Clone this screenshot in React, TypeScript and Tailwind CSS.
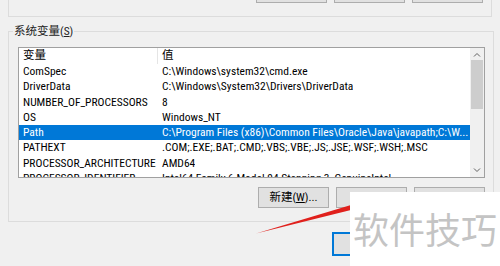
import React from 'react';

const rows = [
  { name: 'ComSpec', value: 'C:\\Windows\\system32\\cmd.exe' },
  { name: 'DriverData', value: 'C:\\Windows\\System32\\Drivers\\DriverData' },
  { name: 'NUMBER_OF_PROCESSORS', value: '8' },
  { name: 'OS', value: 'Windows_NT' },
  {
    name: 'Path',
    value: 'C:\\Program Files (x86)\\Common Files\\Oracle\\Java\\javapath;C:\\W...',
    selected: true,
  },
  { name: 'PATHEXT', value: '.COM;.EXE;.BAT;.CMD;.VBS;.VBE;.JS;.JSE;.WSF;.WSH;.MSC' },
  { name: 'PROCESSOR_ARCHITECTURE', value: 'AMD64' },
  { name: 'PROCESSOR_IDENTIFIER', value: 'Intel64 Family 6 Model 94 Stepping 3, GenuineIntel' },
];

function WinButton({ children, className = '' }: { children?: React.ReactNode; className?: string }) {
  return (
    <div
      className={`w-[71px] h-[21px] flex items-center justify-center bg-[#e1e1e1] border border-[#adadad] text-[11.5px] text-black ${className}`}
    >
      {children}
    </div>
  );
}

export default function App() {
  return (
    <div
      className="relative w-[500px] h-[266px] overflow-hidden bg-[#f0f0f0] text-black"
      style={{ fontFamily: '"Roboto Condensed", "Noto Sans CJK SC", sans-serif' }}
    >
      {/* user variables group (cut off at top) */}
      <div className="mx-[8px] h-[17px] border-x border-b border-[#dcdcdc] flex justify-end gap-[7px] pr-[8px]">
        <WinButton className="-mt-[18px]" />
        <WinButton className="-mt-[18px]" />
        <WinButton className="-mt-[18px]" />
      </div>

      {/* system variables group */}
      <fieldset className="mx-[8px] mt-[6px] border border-[#dcdcdc] pb-[13px] pr-[8px]">
        <legend className="ml-[4px] px-[1px] text-[11.5px] leading-[16px] text-[#222]">
          系统变量(<span className="underline">S</span>)
        </legend>

        <div className="ml-[9px] mt-[8px] w-[467px] h-[131px] bg-white border border-[#a0a0a0] flex overflow-hidden">
          <div className="flex-1 flex flex-col text-[11.5px] min-w-0">
            <div className="h-[16px] flex items-center shrink-0">
              <div className="w-[139px] pl-[4px] border-r border-[#e5e5e5] h-full flex items-center">变量</div>
              <div className="pl-[4px]">值</div>
            </div>
            {rows.map((r) => (
              <div
                key={r.name}
                className={`h-[15.25px] shrink-0 flex items-center whitespace-nowrap overflow-hidden ${
                  r.selected ? 'bg-[#0078d7] text-white' : ''
                }`}
              >
                <div className="w-[139px] pl-[4px] shrink-0 overflow-hidden">{r.name}</div>
                <div className="pl-[4px] overflow-hidden">{r.value}</div>
              </div>
            ))}
          </div>

          {/* scrollbar */}
          <div className="w-[14px] shrink-0 bg-[#f0f0f0] flex flex-col">
            <div className="h-[12px] flex items-center justify-center">
              <svg width="8" height="5" viewBox="0 0 8 5">
                <path d="M1 4.5 L4 1.5 L7 4.5" fill="none" stroke="#606060" strokeWidth="1" />
              </svg>
            </div>
            <div className="flex-1">
              <div className="mx-[1px] h-[49px] bg-[#cdcdcd]" />
            </div>
            <div className="h-[14px] flex items-center justify-center">
              <svg width="8" height="5" viewBox="0 0 8 5">
                <path d="M1 0.5 L4 3.5 L7 0.5" fill="none" stroke="#606060" strokeWidth="1" />
              </svg>
            </div>
          </div>
        </div>

        <div className="mt-[9px] flex justify-end gap-[7px]">
          <WinButton>
            新建(<span className="underline">W</span>)...
          </WinButton>
          <WinButton />
          <WinButton />
        </div>
      </fieldset>

      {/* dialog buttons */}
      <div className="mt-[10px] flex justify-end gap-[6px] pr-[12px]">
        <div className="w-[75px] h-[24px] bg-[#e1e1e1] border-2 border-[#0078d7]" />
        <div className="w-[75px] h-[24px] bg-[#e1e1e1] border border-[#adadad]" />
      </div>

      {/* red arrow annotation */}
      <svg className="absolute left-0 top-0 pointer-events-none" width="500" height="266">
        <polygon points="256,233.5 356,203.5 357,208.5" fill="#e0201c" />
      </svg>

      {/* watermark */}
      <div className="absolute left-[350px] top-[192px] w-[150px] h-[74px] bg-white flex items-center justify-center">
        <span
          className="text-[36px] leading-none text-[#c4c4c4] -mt-[2px]"
          style={{ fontFamily: '"Noto Sans CJK SC", sans-serif' }}
        >
          软件技巧
        </span>
      </div>
    </div>
  );
}
